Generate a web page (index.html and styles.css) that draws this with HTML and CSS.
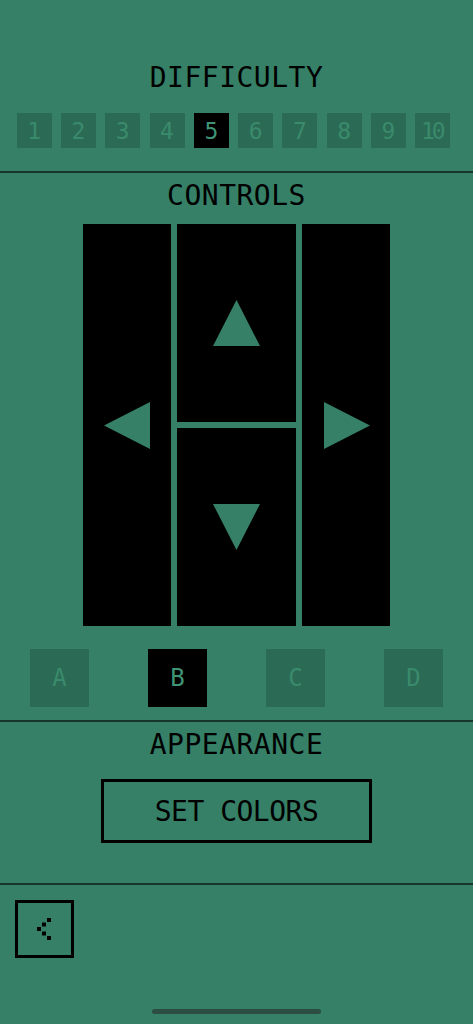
FILE: index.html
```html
<!DOCTYPE html>
<html lang="en">

<head>
  <meta charset="UTF-8">
  <title>Settings</title>
  <link rel="stylesheet" href="styles.css">
</head>

<body>
  <div class="screen">
    <section class="section difficulty">
      <h2 class="heading">DIFFICULTY</h2>
      <div class="levels">
        <div class="level">1</div>
        <div class="level">2</div>
        <div class="level">3</div>
        <div class="level">4</div>
        <div class="level active">5</div>
        <div class="level">6</div>
        <div class="level">7</div>
        <div class="level">8</div>
        <div class="level">9</div>
        <div class="level ten">10</div>
      </div>
    </section>

    <div class="rule"></div>

    <section class="section controls">
      <h2 class="heading">CONTROLS</h2>
      <div class="pad">
        <div class="pad-btn left">
          <svg width="47" height="47" viewBox="0 0 47 47"><polygon points="0,23.5 46,0 46,47" /></svg>
        </div>
        <div class="pad-btn up">
          <svg width="47" height="46" viewBox="0 0 47 46"><polygon points="23.5,0 47,46 0,46" /></svg>
        </div>
        <div class="pad-btn down">
          <svg width="47" height="46" viewBox="0 0 47 46"><polygon points="0,0 47,0 23.5,46" /></svg>
        </div>
        <div class="pad-btn right">
          <svg width="47" height="47" viewBox="0 0 47 47"><polygon points="47,23.5 1,0 1,47" /></svg>
        </div>
      </div>
      <div class="layouts">
        <div class="layout">A</div>
        <div class="layout active">B</div>
        <div class="layout">C</div>
        <div class="layout">D</div>
      </div>
    </section>

    <div class="rule"></div>

    <section class="section appearance">
      <h2 class="heading">APPEARANCE</h2>
      <button type="button" class="colors-btn">SET COLORS</button>
    </section>

    <div class="rule"></div>

    <footer class="footer">
      <button type="button" class="back-btn">
        <svg width="14" height="22" viewBox="0 0 14 22">
          <rect x="10" y="0" width="4" height="4" />
          <rect x="5" y="4.5" width="4" height="4" />
          <rect x="0" y="9" width="4" height="4" />
          <rect x="5" y="13.5" width="4" height="4" />
          <rect x="10" y="18" width="4" height="4" />
        </svg>
      </button>
    </footer>

    <div class="home-bar"></div>
  </div>
</body>

</html>
```

FILE: styles.css
```css
body {
  margin: 0;
  background-color: #358066;
  font-family: "DejaVu Sans Mono", "Liberation Mono", monospace;
  color: #000;
}

.screen {
  position: relative;
  height: 1024px;
  overflow: hidden;
}

.section {
  display: flex;
  flex-direction: column;
  align-items: center;
}

.heading {
  margin: 0;
  font-size: 28px;
  line-height: 28px;
  font-weight: normal;
  letter-spacing: 0.5px;
}

.rule {
  height: 2px;
  background-color: #17352b;
}

/* difficulty */
.difficulty {
  padding-top: 64px;
  padding-bottom: 23px;
}

.levels {
  display: flex;
  gap: 9.3px;
  margin-top: 21px;
  margin-right: 6px;
}

.level {
  width: 35px;
  height: 35px;
  display: flex;
  align-items: center;
  justify-content: center;
  background-color: #2b6b55;
  color: #3a8a6c;
  font-size: 23px;
}

.level.ten {
  letter-spacing: -3px;
  padding-right: 2px;
  box-sizing: border-box;
}

.level.active {
  background-color: #000;
  color: #3e9474;
}

/* controls */
.controls {
  padding-top: 9px;
  padding-bottom: 13px;
}

.pad {
  display: grid;
  grid-template-columns: 88px 119px 88px;
  grid-template-rows: 198px 198px;
  gap: 6px;
  margin-top: 14px;
}

.pad-btn {
  background-color: #000;
  display: flex;
  align-items: center;
  justify-content: center;
}

.pad-btn svg {
  display: block;
  fill: #358066;
}

.pad-btn.left {
  grid-column: 1;
  grid-row: 1 / 3;
}

.pad-btn.up {
  grid-column: 2;
  grid-row: 1;
}

.pad-btn.down {
  grid-column: 2;
  grid-row: 2;
}

.pad-btn.right {
  grid-column: 3;
  grid-row: 1 / 3;
}

.layouts {
  align-self: stretch;
  display: flex;
  justify-content: space-between;
  padding: 0 30px;
  margin-top: 23px;
}

.layout {
  width: 59px;
  height: 58px;
  display: flex;
  align-items: center;
  justify-content: center;
  background-color: #2b6b55;
  color: #3a8a6c;
  font-size: 24px;
}

.layout.active {
  background-color: #000;
  color: #3e9474;
}

/* appearance */
.appearance {
  padding-top: 9px;
  padding-bottom: 40px;
}

.colors-btn {
  margin-top: 20px;
  width: 271px;
  height: 64px;
  background: none;
  border: 3px solid #000;
  font-family: inherit;
  font-size: 28px;
  letter-spacing: -0.5px;
  color: #000;
  padding: 0;
}

/* footer */
.footer {
  padding: 15px;
}

.back-btn {
  width: 59px;
  height: 58px;
  background: none;
  border: 3px solid #000;
  padding: 0 2px 0 0;
  display: flex;
  align-items: center;
  justify-content: center;
}

.back-btn svg {
  display: block;
  fill: #000;
}

.home-bar {
  position: absolute;
  left: 152px;
  bottom: 10px;
  width: 169px;
  height: 5px;
  border-radius: 3px;
  background-color: #2c4d42;
}
```
